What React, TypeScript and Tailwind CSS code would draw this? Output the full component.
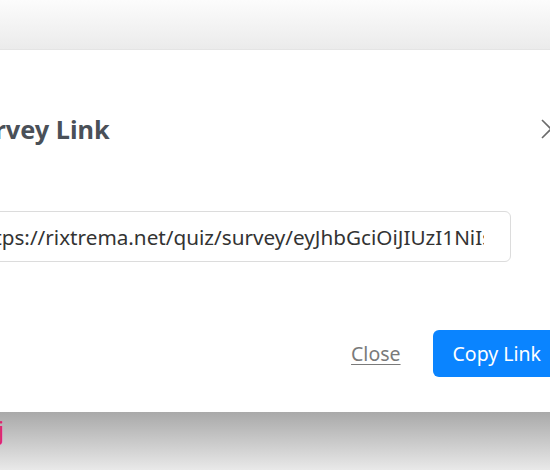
export default function App() {
  return (
    <div className="w-[550px] h-[470px] overflow-hidden bg-white font-['Noto_Sans',sans-serif]">
      {/* backdrop above the dialog */}
      <div className="h-[50px] bg-gradient-to-b from-[#fcfcfc] to-[#ebebeb] border-b border-[#e4e4e4]" />

      {/* dialog */}
      <div className="ml-[-100px] w-[700px] h-[362px] bg-white pl-[70px] pr-[38px] flex flex-col">
        <div className="mt-[64px] h-[30px] flex items-center justify-between">
          <h2 className="ml-[-6px] text-[25.3px] font-bold text-[#4a5058] leading-[30px]">Survey Link</h2>
          <button className="mr-[1px] w-5 h-5 text-[#6b6b6b]">
            <svg viewBox="0 0 20 20" className="w-5 h-5" fill="none" stroke="currentColor" strokeWidth="1.6">
              <path d="M1 1 L19 19 M19 1 L1 19" />
            </svg>
          </button>
        </div>

        <div className="mt-[67px] mr-[51px]">
          <input
            readOnly
            value="https://rixtrema.net/quiz/survey/eyJhbGciOiJIUzI1NiIsInR5cCI6IkpXVCJ9"
            className="ml-[-9px] w-[calc(100%+9px)] h-[51px] border border-[#dcdcdc] rounded-md pl-3 pr-[26px] text-[20.7px] text-[#333] outline-none"
          />
        </div>

        <div className="mt-[68px] flex items-center justify-end gap-[32px]">
          <button className="text-[19.5px] text-[#7a7a7a] underline underline-offset-[3px]">Close</button>
          <button className="h-[47px] pl-[20px] pr-[21px] rounded-md bg-[#0a84ff] text-white text-[19.5px]">Copy Link</button>
        </div>
      </div>

      {/* backdrop below the dialog */}
      <div className="h-[58px] bg-gradient-to-b from-[#a9a9a9] to-[#e9e9e9] pt-[6px]">
        <span className="inline-block ml-[-2px] text-[24px] text-[#e0246b] leading-none">j</span>
      </div>
    </div>
  );
}
